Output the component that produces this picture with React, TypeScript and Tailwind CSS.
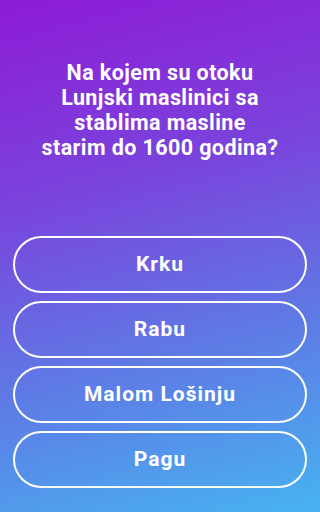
const answers = ["Krku", "Rabu", "Malom Lošinju", "Pagu"];

export default function App() {
  return (
    <div
      className="flex flex-col w-full h-[512px] bg-[linear-gradient(165deg,#8e1bd6_0%,#7a43dc_35%,#5c7fe6_70%,#47b3f1_100%)] text-white px-[13px] pb-[24px]"
      style={{ fontFamily: "Roboto, 'Liberation Sans', sans-serif" }}
    >
      {/* Question */}
      <div className="flex-1 flex items-start justify-center pt-[60px]">
        <p className="text-center font-bold text-[21.5px] leading-[25px] tracking-[0.4px] whitespace-nowrap">
          Na kojem su otoku
          <br />
          Lunjski maslinici sa
          <br />
          stablima masline
          <br />
          starim do 1600 godina?
        </p>
      </div>

      {/* Answers */}
      <div className="flex flex-col gap-[8px]">
        {answers.map((a) => (
          <button
            key={a}
            className="h-[57px] w-full rounded-full border-2 border-white text-[21px] tracking-[1px] font-bold"
          >
            {a}
          </button>
        ))}
      </div>
    </div>
  );
}
